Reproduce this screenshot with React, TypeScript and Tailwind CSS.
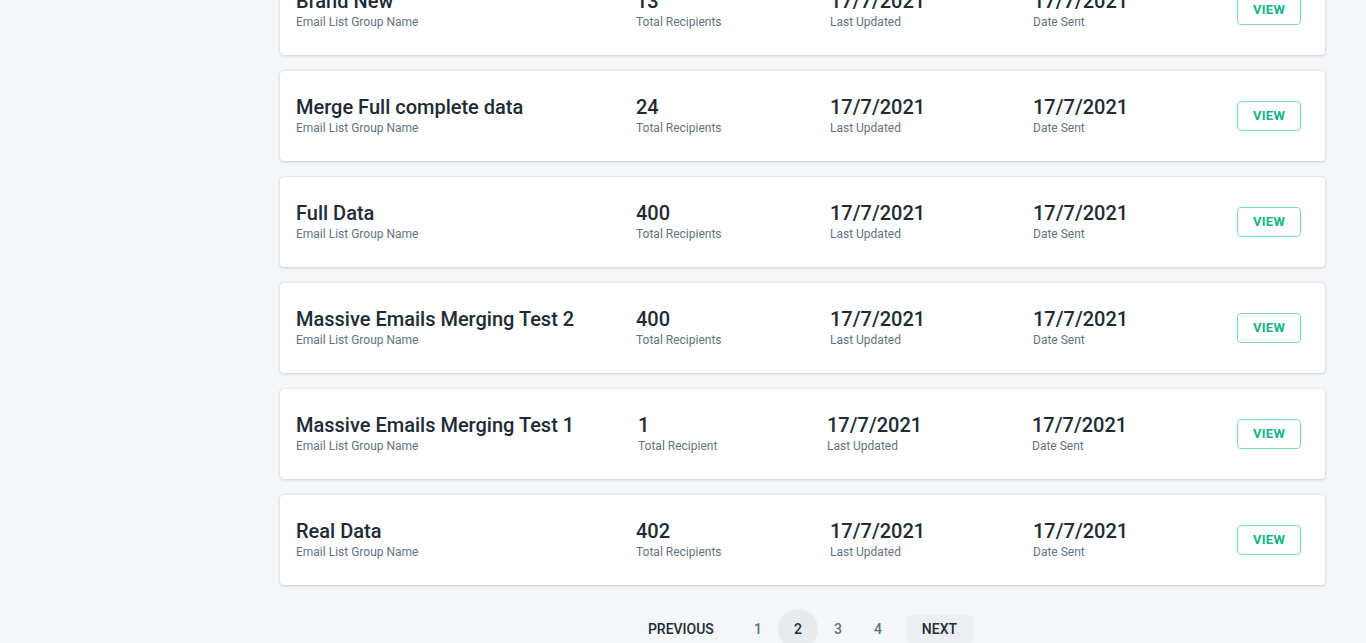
type Group = {
  name: string;
  count: string;
  countLabel: string;
  updated: string;
  sent: string;
  alt?: boolean;
};

const groups: Group[] = [
  { name: 'Brand New', count: '13', countLabel: 'Total Recipients', updated: '17/7/2021', sent: '17/7/2021' },
  { name: 'Merge Full complete data', count: '24', countLabel: 'Total Recipients', updated: '17/7/2021', sent: '17/7/2021' },
  { name: 'Full Data', count: '400', countLabel: 'Total Recipients', updated: '17/7/2021', sent: '17/7/2021' },
  { name: 'Massive Emails Merging Test 2', count: '400', countLabel: 'Total Recipients', updated: '17/7/2021', sent: '17/7/2021' },
  { name: 'Massive Emails Merging Test 1', count: '1', countLabel: 'Total Recipient', updated: '17/7/2021', sent: '17/7/2021', alt: true },
  { name: 'Real Data', count: '402', countLabel: 'Total Recipients', updated: '17/7/2021', sent: '17/7/2021' },
];

const Cell = ({ value, label }: { value: string; label: string }) => (
  <div className="flex flex-col">
    <span className="text-[20px] leading-[22px] font-medium text-[#212b36]">{value}</span>
    <span className="mt-[2px] text-[12px] leading-4 text-[#637381]">{label}</span>
  </div>
);

const GroupCard = ({ g }: { g: Group }) => (
  <div className="h-[90px] bg-white rounded-[4px] shadow-[0_0_2px_rgba(145,158,171,0.3),0_1px_3px_rgba(145,158,171,0.35)] pl-4 pr-6 flex items-center">
    <div
      className={
        g.alt
          ? 'flex-1 grid grid-cols-[342px_189px_205px_1fr] items-center'
          : 'flex-1 grid grid-cols-[340px_194px_203px_1fr] items-center'
      }
    >
      <Cell value={g.name} label="Email List Group Name" />
      <Cell value={g.count} label={g.countLabel} />
      <Cell value={g.updated} label="Last Updated" />
      <Cell value={g.sent} label="Date Sent" />
    </div>
    <button className="w-16 h-[30px] rounded-[4px] border border-[#7fdcc2] text-[#12b48a] text-[13px] font-bold tracking-[0.3px]">
      VIEW
    </button>
  </div>
);

export default function App() {
  return (
    <div
      className="min-h-screen bg-[#f4f6f8] pl-[280px] pr-[41px] overflow-hidden"
      style={{ fontFamily: 'Roboto, "Noto Sans", sans-serif' }}
    >
      <div className="-mt-[35px] flex flex-col gap-4">
        {groups.map((g) => (
          <GroupCard key={g.name} g={g} />
        ))}
      </div>

      <div className="mt-6 flex items-center justify-center text-[14px] font-medium text-[#212b36] h-10">
        <button className="px-4 h-7 uppercase mr-2">Previous</button>
        {['1', '2', '3', '4'].map((n) => (
          <button
            key={n}
            className={
              n === '2'
                ? 'w-10 h-10 rounded-full bg-[#e8ebee] text-[#212b36]'
                : 'w-10 h-10 rounded-full text-[#637381]'
            }
          >
            {n}
          </button>
        ))}
        <button className="ml-2 px-4 h-7 rounded-[4px] bg-[#eceef1] uppercase">Next</button>
      </div>
      <div className="h-6" />
    </div>
  );
}
